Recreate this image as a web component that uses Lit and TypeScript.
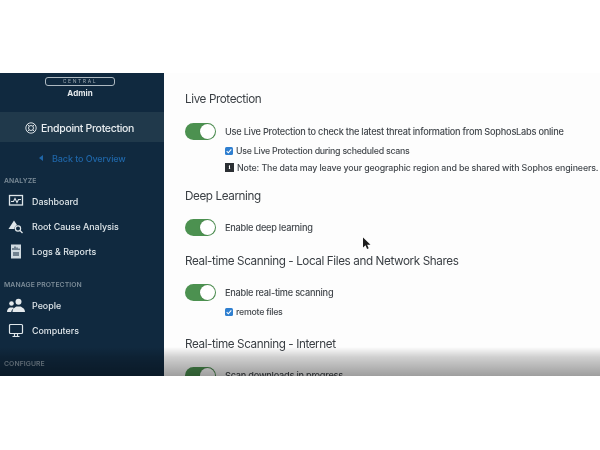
import { LitElement, html, css, svg } from "lit";
import { customElement } from "lit/decorators.js";

const icons: Record<string, unknown> = {
  dash: svg`<rect x="1.5" y="1.5" width="13" height="9.5" fill="none" stroke="#dfe6ea" stroke-width="1.3"/><path d="M3 7.5h2.5l1.5-3 2 4 1.5-3H13" fill="none" stroke="#dfe6ea" stroke-width="1.1"/>`,
  root: svg`<path d="M0.5 10 L6 1.5 L9 6 A4 4 0 0 0 6.5 10 Z" fill="#dfe6ea"/><circle cx="10" cy="9.5" r="2.6" fill="none" stroke="#dfe6ea" stroke-width="1.2"/><path d="M12 11.5l2.5 2.5" stroke="#dfe6ea" stroke-width="1.3"/>`,
  logs: svg`<rect x="3" y="0.5" width="10" height="14" fill="#cfd9df"/><path d="M5 6V4M7 6V2.5M9 6V3.5M11 6V4.5M5 9h6M5 11h6" stroke="#10293f" stroke-width="1"/>`,
  people: svg`<circle cx="11.5" cy="3.8" r="3" fill="#e4e9ec"/><path d="M5.5 14c0-4 2.5-4.6 4-5.6h4c1.5 1 4.500 1.600 4.500 5.600Z" fill="#e4e9ec"/><circle cx="4.500" cy="5.500" r="2.300" fill="#e4e9ec"/><path d="M0 14c0-3 1.500-3.800 3-4.500h3l1 .8c-1.500 1-2.500 2-2.800 3.700Z" fill="#e4e9ec"/>`,
  comp: svg`<rect x="1.500" y="1.500" width="13" height="9" rx="1" fill="none" stroke="#dfe6ea" stroke-width="1.200"/><path d="M6.500 11v2M9.500 11v2M4.500 13.500h7" stroke="#dfe6ea" stroke-width="1.200"/>`,
};

@customElement("app-root")
export class AppRoot extends LitElement {
  static styles = css`
    :host {
      display: block;
      width: 600px;
      height: 450px;
      background: #fff;
      font-family: Inter, "Liberation Sans", sans-serif;
      padding-top: 73px;
      box-sizing: border-box;
      overflow: hidden;
    }
    .stage {
      position: relative;
      display: flex;
      height: 303px;
      overflow: hidden;
      filter: blur(0.35px);
    }
    .side {
      width: 164px;
      flex: none;
      background: #10293f;
      color: #e4e9ec;
      display: flex;
      flex-direction: column;
    }
    .pill {
      align-self: flex-start;
      width: 70px;
      height: 9px;
      margin: 4px 0 0 45px;
      border: 1px solid #aeb9c1;
      border-radius: 3px;
      box-sizing: border-box;
      font-size: 5px;
      line-height: 7px;
      letter-spacing: 1.6px;
      text-align: center;
      color: #9aa7b0;
    }
    .admin {
      text-align: center;
      font-size: 8px;
      font-weight: 700;
      line-height: 10px;
      margin-top: 2px;
      padding-right: 4px;
      color: #e4e9ec;
      margin-bottom: 14px;
    }
    .band {
      height: 30px;
      background: #20394b;
      display: flex;
      align-items: center;
      padding: 2px 0 0 25px;
      box-sizing: border-box;
      gap: 4px;
      font-size: 10.500px;
      letter-spacing: -0.3px;
      font-weight: 500;
      color: #e8edf0;
    }
    .back {
      height: 32px;
      display: flex;
      align-items: center;
      padding-left: 39px;
      gap: 9px;
      color: #1f66a8;
      font-size: 9px;
      letter-spacing: -0.1px;
      font-weight: 500;
    }
    .tri {
      width: 0;
      height: 0;
      border: 3.500px solid transparent;
      border-right: 4px solid #1f66a8;
      border-left: 0;
    }
    .group {
      font-size: 6.800px;
      font-weight: 600;
      line-height: 10px;
      color: #7c8c98;
      padding-left: 4px;
      letter-spacing: 0.1px;
    }
    .g1 { margin-top: 2px; }
    .g2 { margin-top: 16px; }
    .g3 { margin-top: 16px; }
    .item {
      display: flex;
      align-items: center;
      height: 25px;
      padding-left: 8px;
      gap: 8px;
      font-size: 8.900px;
      font-weight: 500;
      color: #dfe6ea;
    }
    .first { margin-top: 3px; }
    .item svg { width: 16px; height: 15px; flex: none; }
    .people svg { width: 19px; }
    .people { padding-left: 7px; gap: 6px; margin-top: 3px; }
    .main {
      flex: 1;
      background: #fdfdfd;
      padding: 19px 0 0 21px;
      color: #3a3f44;
      white-space: nowrap;
    }
    h2 {
      margin: 0;
      font-size: 11.700px;
      letter-spacing: -0.4px;
      font-weight: 400;
      line-height: 15px;
      color: #3a3f44;
    }
    .row {
      display: flex;
      align-items: center;
      gap: 9px;
      height: 17px;
      font-size: 9.200px;
      letter-spacing: -0.24px;
      font-weight: 500;
      color: #43484d;
    }
    h2 + .row { margin-top: 16px; }
    .sec + .row { margin-top: 15px; }
    .sec { margin-top: 13px; }
    .sec2 { margin-top: 18px; }
    .sec3 { margin-top: 17px; }
    .sec2 + .row, .sec3 + .row { margin-top: 15px; }
    .toggle {
      width: 31px;
      height: 17px;
      border-radius: 9px;
      background: #4c9150;
      flex: none;
      display: flex;
      justify-content: flex-end;
      box-sizing: border-box;
      padding: 1px;
    }
    .knob {
      width: 15px;
      height: 15px;
      border-radius: 50%;
      background: #fff;
      box-shadow: 0 0 1px #0004;
    }
    .sub {
      display: flex;
      align-items: center;
      gap: 3px;
      height: 17px;
      margin-left: 40px;
      font-size: 8.800px;
      letter-spacing: -0.26px;
      font-weight: 500;
      color: #43484d;
    }
    .note { letter-spacing: -0.11px; }
    .row + .sub { margin-top: 2px; }
    .check {
      width: 8px;
      height: 8px;
      border-radius: 1.500px;
      background: #2f7fd0;
      flex: none;
      display: block;
    }
    .info {
      width: 9px;
      height: 9px;
      background: #2b2f33;
      color: #fff;
      font-size: 7px;
      line-height: 9px;
      font-weight: 700;
      text-align: center;
      flex: none;
      font-family: "Liberation Serif", serif;
    }
    .fade {
      position: absolute;
      left: 0;
      right: 0;
      bottom: 0;
      height: 29px;
      background: linear-gradient(to bottom, #0000 0%, #0000002e 35%, #00000060 100%);
      pointer-events: none;
    }
    .cursor {
      position: absolute;
      left: 362px;
      top: 164px;
      width: 9px;
      height: 13px;
    }
  `;

  private check() {
    return html`<svg class="check" viewBox="0 0 8 8"><path d="M1.700 4.200l1.600 1.600 3-3.500" fill="none" stroke="#fff" stroke-width="1.100"/></svg>`;
  }

  private item(icon: string, label: string, cls = "") {
    return html`<div class="item ${cls}"><svg viewBox="0 0 ${icon === "people" ? 19 : 16} 15">${icons[icon]}</svg>${label}</div>`;
  }

  private toggleRow(label: string) {
    return html`<div class="row"><div class="toggle"><div class="knob"></div></div>${label}</div>`;
  }

  render() {
    return html`<div class="stage">
      <aside class="side">
        <div class="pill">CENTRAL</div>
        <div class="admin">Admin</div>
        <div class="band">
          <svg width="12" height="12" viewBox="0 0 12 12" fill="none" stroke="#e8edf0" stroke-width="0.900">
            <circle cx="6" cy="6" r="5.200"/><circle cx="6" cy="6" r="2.500"/>
            <path d="M2.300 2.300l1.900 1.900M9.700 2.300L7.800 4.200M2.300 9.700l1.900-1.900M9.700 9.700L7.800 7.800"/>
          </svg>
          Endpoint Protection
        </div>
        <div class="back"><span class="tri"></span>Back to Overview</div>
        <div class="group g1">ANALYZE</div>
        ${this.item("dash", "Dashboard", "first")}
        ${this.item("root", "Root Cause Analysis")}
        ${this.item("logs", "Logs & Reports")}
        <div class="group g2">MANAGE PROTECTION</div>
        ${this.item("people", "People", "people")}
        ${this.item("comp", "Computers")}
        <div class="group g3">CONFIGURE</div>
      </aside>
      <main class="main">
        <h2>Live Protection</h2>
        ${this.toggleRow("Use Live Protection to check the latest threat information from SophosLabs online")}
        <div class="sub">${this.check()}Use Live Protection during scheduled scans</div>
        <div class="sub note"><span class="info">i</span>Note: The data may leave your geographic region and be shared with Sophos engineers.</div>
        <h2 class="sec">Deep Learning</h2>
        ${this.toggleRow("Enable deep learning")}
        <h2 class="sec2">Real-time Scanning - Local Files and Network Shares</h2>
        ${this.toggleRow("Enable real-time scanning")}
        <div class="sub">${this.check()}remote files</div>
        <h2 class="sec3">Real-time Scanning - Internet</h2>
        ${this.toggleRow("Scan downloads in progress")}
      </main>
      <div class="fade"></div>
      <svg class="cursor" viewBox="0 0 9 13"><path d="M1 0.500v10l2.500-2.200 1.600 3.700 1.600-.7-1.600-3.600H8.500Z" fill="#1c1c1c"/></svg>
    </div>`;
  }
}
